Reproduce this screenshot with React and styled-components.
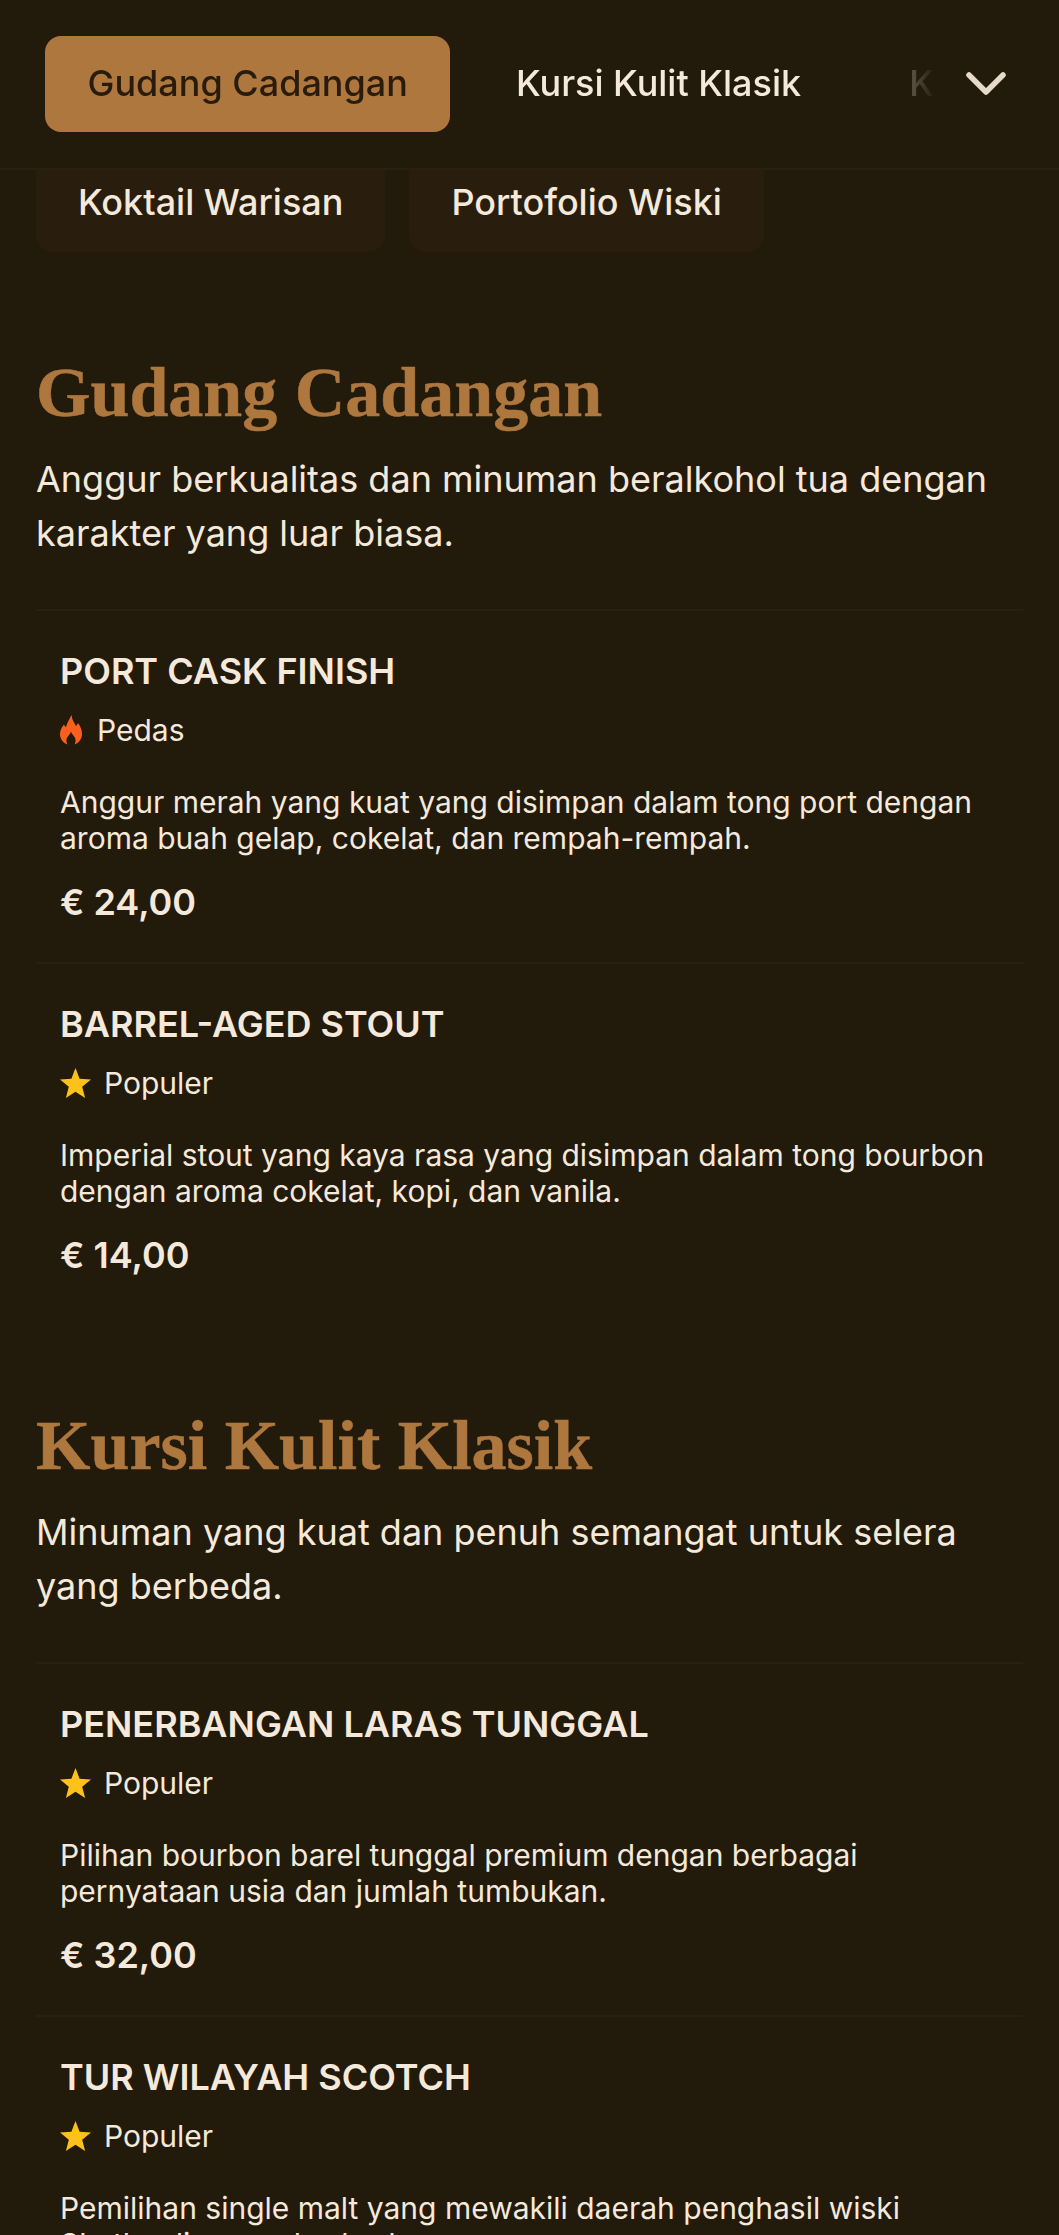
import React from "react";
import styled, { createGlobalStyle } from "styled-components";

const GlobalStyle = createGlobalStyle`
  html, body {
    margin: 0;
    padding: 0;
    background: #221a0b;
  }
  body {
    font-family: Inter, "Liberation Sans", sans-serif;
    color: #f4e9da;
  }
`;

const Page = styled.div`
  width: 1059px;
  height: 2235px;
  overflow: hidden;
  background: #221a0b;
`;

const Header = styled.header`
  position: relative;
  z-index: 2;
  height: 170px;
  display: flex;
  align-items: center;
  padding: 0 45px;
  box-sizing: border-box;
  gap: 28px;
  background: #221a0b;
  border-bottom: 2px solid #2a2012;
`;

const TabScroller = styled.div`
  flex: 1;
  display: flex;
  gap: 23px;
  overflow: hidden;
  -webkit-mask-image: linear-gradient(to right, #000 90%, transparent 100%);
  mask-image: linear-gradient(to right, #000 90%, transparent 100%);
`;

const Tab = styled.button`
  flex: none;
  height: 96px;
  padding: 0 42.5px 2px;
  border: 0;
  border-radius: 16px;
  font: 500 36px Inter, sans-serif;
  color: ${(p) => (p.$active ? "#2a1c0c" : "#f4e9da")};
  background: ${(p) => (p.$active ? "#ae773e" : "transparent")};
`;

const Chevron = styled.svg`
  flex: none;
  width: 44px;
  height: 28px;
  margin-right: 6px;
`;

const SubNav = styled.nav`
  display: flex;
  gap: 24px;
  padding: 0 36px;
  margin-top: -13px;
`;

const SubTab = styled.button`
  height: 95px;
  padding: 0 42px 5px;
  border: 0;
  border-radius: 16px;
  font: 500 36px Inter, sans-serif;
  color: #f4e9da;
  background: #291d0e;
`;

const Section = styled.section`
  padding: 0 36px;
  margin-top: ${(p) => p.$top}px;
`;

const Heading = styled.h2`
  margin: 0;
  font: 700 70px/86px "Liberation Serif", serif;
  -webkit-text-stroke: 0.5px #ae773e;
  color: #ae773e;
`;

const Lead = styled.p`
  margin: 16px 0 0;
  font: 400 36px/54px Inter, sans-serif;
  color: #f4e9da;
`;

const ItemList = styled.div`
  margin-top: 49px;
`;

const Item = styled.article`
  height: 353px;
  box-sizing: border-box;
  padding: 38px 24px 0;
  border-top: 2px solid #2a2012;
`;

const Title = styled.h3`
  margin: 0;
  font: 600 36px/44px Inter, sans-serif;
  text-transform: uppercase;
  color: #f4e9da;
`;

const Tag = styled.div`
  display: flex;
  align-items: center;
  gap: ${(p) => (p.$hot ? 15 : 13)}px;
  margin-top: 19px;
  height: 36px;
  font: 400 30px/36px Inter, sans-serif;
  color: #f4e9da;
`;

const Desc = styled.p`
  margin: 36px 0 0;
  font: 400 30px/36px Inter, sans-serif;
  color: #f4e9da;
`;

const Price = styled.div`
  margin-top: 24px;
  font: 600 36px/44px Inter, sans-serif;
  color: #f4e9da;
`;

const FlameIcon = () => (
  <svg width="22" height="30" viewBox="0 0 22 30">
    <path
      fill="#f9601f"
      d="M11.5 0C12 5 14.5 8 16 11C17 10 17.6 9 18 8C20.5 11 22 15 22 19C22 24 19 28 14.5 29.5C16 27 16 24 14.5 22C13 20 11.5 18.5 11 16.5C10.5 18.5 9 20 7.5 22C6 24 6 27 7.5 29.5C3 28 0 24 0 19C0 15 2 12 4 9.5C4.5 10.5 5 11.5 6 12C7 8 9.5 4 11.5 0Z"
    />
  </svg>
);

const StarIcon = () => (
  <svg width="31" height="30" viewBox="0 0 31 30">
    <polygon
      fill="#fcc21b"
      points="15.5,0 19.6,10.8 31,11.5 22.2,18.8 25.1,30 15.5,23.8 5.9,30 8.8,18.8 0,11.5 11.4,10.8"
    />
  </svg>
);

const sections = [
  {
    top: 98,
    name: "Gudang Cadangan",
    lead: "Anggur berkualitas dan minuman beralkohol tua dengan karakter yang luar biasa.",
    items: [
      {
        title: "Port Cask Finish",
        tag: "hot",
        desc: "Anggur merah yang kuat yang disimpan dalam tong port dengan aroma buah gelap, cokelat, dan rempah-rempah.",
        price: "€ 24,00",
      },
      {
        title: "Barrel-Aged Stout",
        tag: "pop",
        desc: "Imperial stout yang kaya rasa yang disimpan dalam tong bourbon dengan aroma cokelat, kopi, dan vanila.",
        price: "€ 14,00",
      },
    ],
  },
  {
    top: 88,
    name: "Kursi Kulit Klasik",
    lead: "Minuman yang kuat dan penuh semangat untuk selera yang berbeda.",
    items: [
      {
        title: "Penerbangan Laras Tunggal",
        tag: "pop",
        desc: "Pilihan bourbon barel tunggal premium dengan berbagai pernyataan usia dan jumlah tumbukan.",
        price: "€ 32,00",
      },
      {
        title: "Tur Wilayah Scotch",
        tag: "pop",
        desc: "Pemilihan single malt yang mewakili daerah penghasil wiski Skotlandia yang berbeda.",
        price: "€ 28,00",
      },
    ],
  },
];

const MenuItem = ({ item }) => (
  <Item>
    <Title>{item.title}</Title>
    <Tag $hot={item.tag === "hot"}>
      {item.tag === "hot" ? <FlameIcon /> : <StarIcon />}
      {item.tag === "hot" ? "Pedas" : "Populer"}
    </Tag>
    <Desc>{item.desc}</Desc>
    <Price>{item.price}</Price>
  </Item>
);

export default function App() {
  return (
    <Page>
      <GlobalStyle />
      <Header>
        <TabScroller>
          <Tab $active>Gudang Cadangan</Tab>
          <Tab>Kursi Kulit Klasik</Tab>
          <Tab>Koktail Warisan</Tab>
        </TabScroller>
        <Chevron viewBox="0 0 44 28" fill="none">
          <polyline
            points="5,5 22,22 39,5"
            stroke="#e6daca"
            strokeWidth="5.5"
            strokeLinecap="round"
            strokeLinejoin="round"
          />
        </Chevron>
      </Header>
      <SubNav>
        <SubTab>Koktail Warisan</SubTab>
        <SubTab>Portofolio Wiski</SubTab>
      </SubNav>
      {sections.map((s) => (
        <Section key={s.name} $top={s.top}>
          <Heading>{s.name}</Heading>
          <Lead>{s.lead}</Lead>
          <ItemList>
            {s.items.map((it) => (
              <MenuItem key={it.title} item={it} />
            ))}
          </ItemList>
        </Section>
      ))}
    </Page>
  );
}
